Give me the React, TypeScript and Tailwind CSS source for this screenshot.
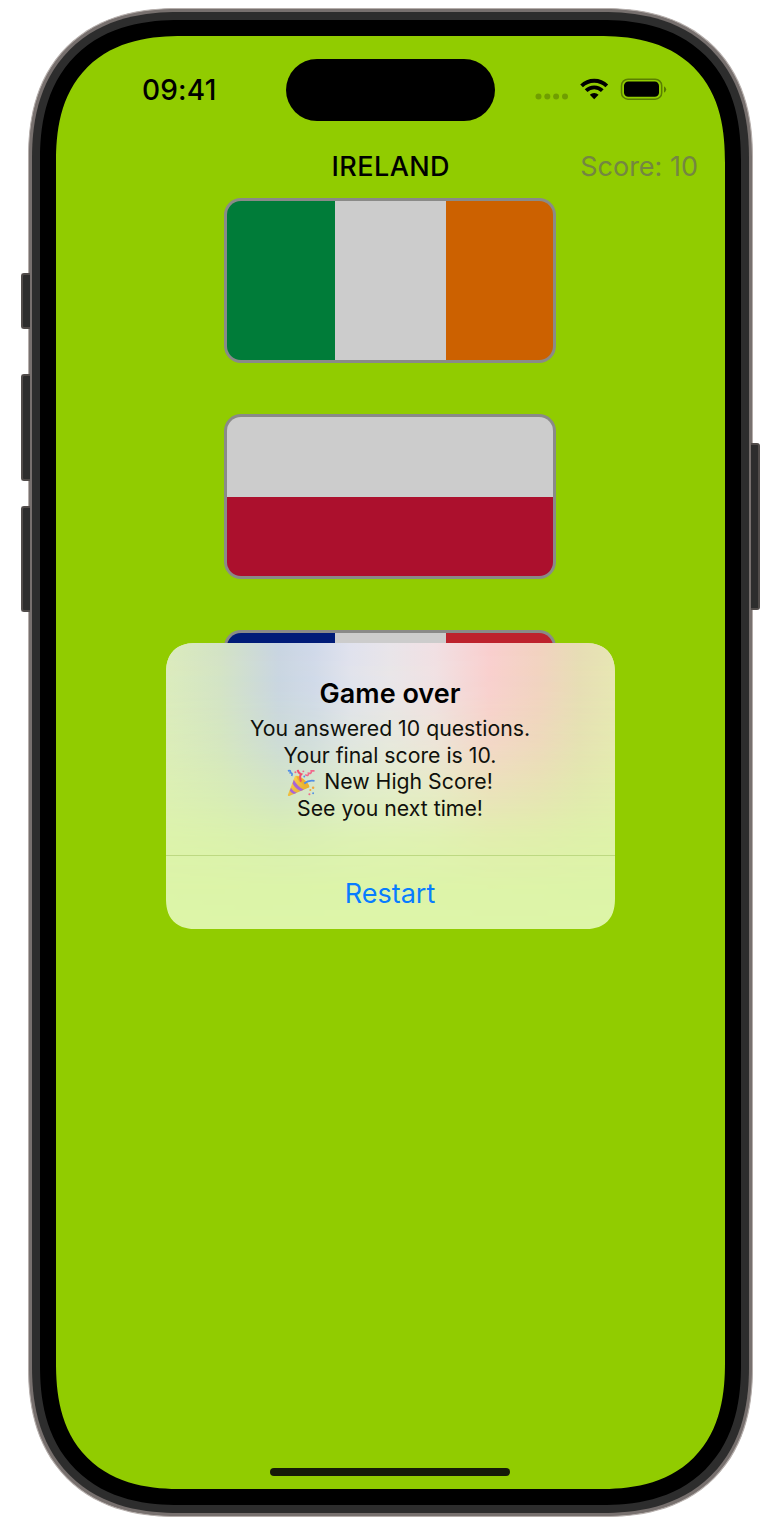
import React from "react";

const line = "flex h-[26.6px] items-center justify-center whitespace-pre";

function SideButton({ className }: { className: string }) {
  return <div className={"absolute z-10 border-2 border-[#514c4a] bg-[#2d2d2d] " + className} />;
}

function Flag({ colors, vertical }: { colors: string[]; vertical?: boolean }) {
  return (
    <div className="h-[165px] w-[332px] rounded-[17px] bg-[#8a8a88] p-[3px]">
      <div className={"flex h-full overflow-hidden rounded-[14px] " + (vertical ? "flex-col" : "flex-row")}>
        {colors.map((c, i) => (
          <div key={i} className={c} />
        ))}
      </div>
    </div>
  );
}

function PartyPopper() {
  return (
    <svg viewBox="0 0 30 30" className="relative top-px h-[28px] w-[28px]">
      <defs>
        <linearGradient id="cone" x1="0" y1="0" x2="1" y2="1">
          <stop offset="0" stopColor="#ffd95c" />
          <stop offset="1" stopColor="#dea01e" />
        </linearGradient>
      </defs>
      <path d="M8.500 7.500C13 5 24.500 15 24 19.500L2.500 28.800Q0.500 29.500 1 27.500Z" fill="url(#cone)" />
      <path d="M7.300 11.500Q11 18.500 18 22.200L14.500 23.700Q8.500 20.500 6 15.500Z" fill="#a765d8" />
      <path d="M4.300 20.200Q6.500 24.500 10.500 25.500L7.300 26.900Q4.200 25.500 3 23.300Z" fill="#a765d8" />
      <path d="M10 8C13 6.500 24 15.500 23.500 19.500C18 19 11 12 10 8Z" fill="#edb02e" />
      <path d="M15 13.500Q13 7.500 15.200 5.500Q12 4.500 11.500 1" fill="none" stroke="#f0506e" strokeWidth="2.200" />
      <path d="M18.500 15.500Q23 11.500 29.500 12.700" fill="none" stroke="#4f8ee6" strokeWidth="2" />
      <path d="M1 2Q4.500 .8 3.500 4Q6.500 4 5 7.500" fill="none" stroke="#4f8ee6" strokeWidth="1.800" />
      <path d="M19.500 6Q23 8.500 23 4.500Q26.500 5.500 26 2L29.500 2" fill="none" stroke="#f2678b" strokeWidth="1.800" />
      <g fill="#f2678b"><circle cx="9" cy="3.500" r="1.100" /><circle cx="24" cy="27" r="1.100" /><circle cx="17.500" cy="2.500" r="1" /></g>
      <g fill="#f0a63c"><circle cx="28" cy="20" r="1.300" /><circle cx="25" cy="22.500" r="1.100" /></g>
      <g fill="#4f8ee6"><circle cx="28" cy="26" r="1" /><circle cx="18.500" cy="8" r="1" /></g>
    </svg>
  );
}

function StatusBar() {
  return (
    <div className="flex h-[61.5px] items-center text-black">
      <div className="w-[230.500px] pt-px pl-[86.500px] text-[28px] font-medium leading-none tracking-[0.2px]">09:41</div>
      <div className="h-full w-[209px] rounded-full bg-black" />
      <svg viewBox="534 76 134 26" className="relative -top-px ml-[39px] h-[26px] w-[134px]">
        <g fill="#000" opacity=".22">
          <circle cx="538.500" cy="96.500" r="3" />
          <circle cx="547.300" cy="96.500" r="3" />
          <circle cx="556.100" cy="96.500" r="3" />
          <circle cx="565" cy="96.500" r="3" />
        </g>
        <g fill="none" stroke="#000" strokeWidth="3.900">
          <path d="M581.600 85.900a17.900 17.900 0 0 1 25.200 0" />
          <path d="M586.100 90.700a11.600 11.600 0 0 1 16.200 0" />
        </g>
        <path d="M594.200 99.200l-4.400-4.400a6.400 6.400 0 0 1 8.800 0z" />
        <rect x="621.500" y="79.200" width="40.200" height="20" rx="6.500" fill="none" stroke="#000" strokeOpacity=".38" strokeWidth="1.500" />
        <rect x="624" y="81.500" width="35" height="15.300" rx="4.300" />
        <path d="M664 86.200q2.200 1.300 2.200 3.300t-2.200 3.300z" opacity=".4" />
      </svg>
    </div>
  );
}

function Alert() {
  return (
    <div className="absolute left-[110px] top-[607px] flex h-[286px] w-[449px] flex-col overflow-hidden rounded-[24px] bg-[#ddf5a8] supports-[corner-shape:squircle]:rounded-[31px] supports-[corner-shape:squircle]:[corner-shape:superellipse(1.3)]">
      <div className="absolute inset-0 bg-[linear-gradient(90deg,#dbebbd_0%,#d3e3c6_12%,#c9d5e2_25%,#d0d9ea_33%,#e0e2ee_41%,#e9e5ea_50%,#f1e0e4_60%,#f9cfcf_72%,#f2d2c1_83%,#e7ddb5_92%,#e7e6b3_100%)] [mask-image:linear-gradient(180deg,#000_0%,rgba(0,0,0,.96)_18%,rgba(0,0,0,.78)_36%,rgba(0,0,0,.45)_54%,rgba(0,0,0,.17)_68%,rgba(0,0,0,.03)_85%,transparent_100%)]" />
      <div className="relative flex h-[212px] flex-col pt-[31px] text-center text-black">
        <h2 className="flex h-[38px] items-center justify-center text-[27px] font-semibold leading-none">Game over</h2>
        <div className="pt-[3.500px] text-[21.250px] leading-none text-[#10110c]">
          <p className={line}>You answered 10 questions.</p>
          <p className={line}>Your final score is 10.</p>
          <p className={line}><PartyPopper /><span className="ml-[9px]">New High Score!</span></p>
          <p className={line}>See you next time!</p>
        </div>
      </div>
      <button className="relative h-[74px] border-t border-solid border-t-[#bdd982] pt-[2px] text-[27px] leading-none text-[#087cff]">Restart</button>
    </div>
  );
}

export default function App() {
  return (
    <div className="relative h-[1540px] w-[780px] overflow-hidden bg-white pl-[28px] pt-[8px] font-['Inter',sans-serif]">
      <SideButton className="left-[20.500px] top-[273px] h-[56px] w-[9px] rounded-l-[3px] border-r-0" />
      <SideButton className="left-[20.500px] top-[374px] h-[107px] w-[9px] rounded-l-[3px] border-r-0" />
      <SideButton className="left-[20.500px] top-[506px] h-[106px] w-[9px] rounded-l-[3px] border-r-0" />
      <SideButton className="left-[751px] top-[443px] h-[167px] w-[9px] rounded-r-[3px] border-l-0" />
      <div className="relative h-[1509px] w-[724.500px] rounded-[125px] border border-[#b5aeab] bg-[#77706e] p-[3px] supports-[corner-shape:squircle]:rounded-[150px] supports-[corner-shape:squircle]:[corner-shape:superellipse(1.22)]">
        <div className="h-full rounded-[121px] bg-[#2d2d2d] p-[8px] supports-[corner-shape:squircle]:rounded-[147px] supports-[corner-shape:squircle]:[corner-shape:superellipse(1.225)]">
          <div className="h-full rounded-[113px] bg-black px-[15.500px] py-[16px] supports-[corner-shape:squircle]:rounded-[140px] supports-[corner-shape:squircle]:[corner-shape:superellipse(1.24)]">
            <div className="relative flex h-full flex-col items-center overflow-hidden rounded-[99px] bg-[#91cc00] pt-[23px] supports-[corner-shape:squircle]:rounded-[127px] supports-[corner-shape:squircle]:[corner-shape:superellipse(1.29)]">
              <div className="w-full"><StatusBar /></div>
              <div className="mt-[25.500px] grid h-[40px] w-full grid-cols-3 items-center text-[27px] leading-none">
                <h1 className="col-start-2 pl-px text-center font-medium tracking-[0.45px]">IRELAND</h1>
                <span className="pr-[27px] text-right text-[#748642]">Score: 10</span>
              </div>
              <main className="mt-[12px] flex flex-col gap-[51px]">
                <Flag colors={["w-[108px] bg-[#007c39]", "w-[111px] bg-[#cccccc]", "grow bg-[#cc6100]"]} />
                <Flag vertical colors={["h-[80px] bg-[#cccccc]", "grow bg-[#ac102d]"]} />
                <Flag colors={["w-[108px] bg-[#001b78]", "w-[111px] bg-[#cccccc]", "grow bg-[#bd222d]"]} />
              </main>
              <Alert />
              <div className="mt-auto mb-[13px] h-[8px] w-[240px] shrink-0 rounded-full bg-[#151a08]" />
            </div>
          </div>
        </div>
      </div>
    </div>
  );
}
